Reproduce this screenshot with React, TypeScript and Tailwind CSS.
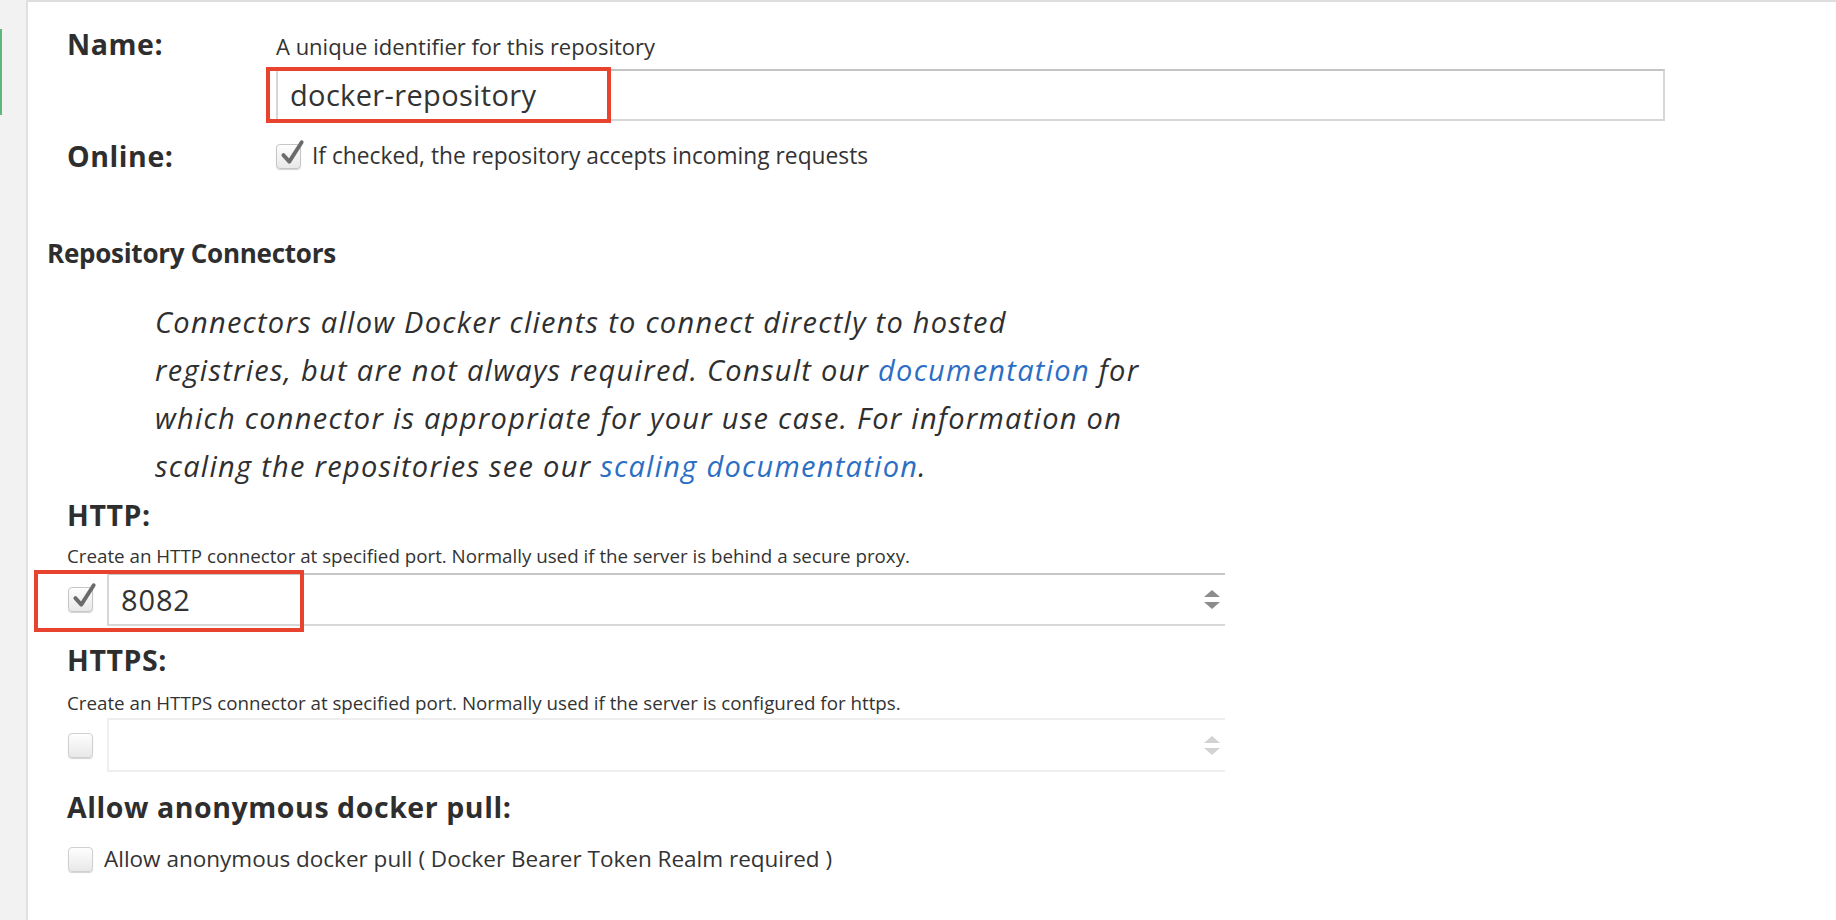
import React from "react";

const sans = "font-['Open_Sans','Lato',sans-serif]";

function Check({ checked, faded }: { checked?: boolean; faded?: boolean }) {
  return (
    <span
      className={`relative inline-flex h-[25px] w-[25px] shrink-0 rounded-[4px] border bg-linear-to-b from-[#fefefe] to-[#e8e8e8] shadow-[0_1px_1px_rgba(0,0,0,0.18)] ${
        faded ? "border-[#d0d0d0]" : "border-[#c6c6c6]"
      }`}
    >
      {checked && (
        <svg
          viewBox="0 0 26 26"
          className="absolute -top-[6px] left-[1px] h-[28px] w-[28px] overflow-visible"
          aria-hidden="true"
        >
          <path
            d="M5 15 L10.5 21 L22 3"
            fill="none"
            stroke="#6b6b6b"
            strokeWidth="3.6"
            strokeLinecap="round"
            strokeLinejoin="round"
          />
        </svg>
      )}
    </span>
  );
}

function Spinner({ faded }: { faded?: boolean }) {
  const up = faded ? "border-b-[#d2d2d2]" : "border-b-[#8c8c8c]";
  const down = faded ? "border-t-[#d2d2d2]" : "border-t-[#8c8c8c]";
  return (
    <div className="flex flex-col items-center gap-[5px]">
      <span className={`h-0 w-0 border-x-[8px] border-b-[7px] border-x-transparent ${up}`} />
      <span className={`h-0 w-0 border-x-[8px] border-t-[7px] border-x-transparent ${down}`} />
    </div>
  );
}

function Label({ children }: { children: React.ReactNode }) {
  return <div className="text-[28.5px] font-bold leading-[32px] tracking-[0.02em] text-[#2e2e2e]">{children}</div>;
}

function Hint({ children }: { children: React.ReactNode }) {
  return <p className="text-[18.75px] leading-[22px] text-[#333]">{children}</p>;
}

export default function App() {
  return (
    <div className={`flex min-h-[920px] w-[1836px] bg-white ${sans}`}>
      {/* Side rail */}
      <aside className="flex w-[26px] shrink-0 flex-col bg-[#f2f2f2]">
        <div className="mt-[29px] h-[86px] w-[2px] bg-[#5cb87f]" />
      </aside>
      <div className="w-[2px] shrink-0 bg-[#e0e0e0]" />

      <main className="flex-1 border-t-2 border-[#dedede] pl-[39px] text-[#333]">
        {/* Name */}
        <div className="flex">
          <div className="w-[209px] shrink-0 pt-[26px]">
            <Label>Name:</Label>
          </div>
          <div className="pt-[32px]">
            <p className="text-[22px] leading-[24px] text-[#333]">A unique identifier for this repository</p>
            <div className="relative mt-[11px] flex h-[52px] w-[1389px] items-center border-2 border-[#d6d6d6] border-t-[#c4c4c4] pl-[12px] text-[29px] tracking-[0.012em] text-[#333]">
              docker-repository
              <div className="pointer-events-none absolute -left-[12px] -top-[4px] h-[56px] w-[345px] border-4 border-[#e8432f]" />
            </div>
          </div>
        </div>

        {/* Online */}
        <div className="mt-[19px] flex h-[32px] items-center">
          <div className="w-[209px] shrink-0">
            <Label>Online:</Label>
          </div>
          <div className="flex items-center gap-[11px]">
            <Check checked />
            <span className="text-[22.75px] leading-[28px]">If checked, the repository accepts incoming requests</span>
          </div>
        </div>

        {/* Connectors */}
        <h3 className="-ml-[20px] mt-[66px] text-[26px] font-bold leading-[30px] tracking-[-0.01em] text-[#2e2e2e]">
          Repository Connectors
        </h3>

        <p className="ml-[88px] mt-[30px] whitespace-nowrap text-[29px] italic leading-[48px] tracking-[0.044em] text-[#2f2f2f]">
          Connectors allow Docker clients to connect directly to hosted
          <br />
          registries, but are not always required. Consult our{" "}
          <a href="#" className="text-[#2c6ec4]">documentation</a> for
          <br />
          which connector is appropriate for your use case. For information on
          <br />
          scaling the repositories see our{" "}
          <a href="#" className="text-[#2c6ec4]">scaling documentation</a>.
        </p>

        {/* HTTP */}
        <div className="mt-[9px]">
          <Label>HTTP:</Label>
        </div>
        <div className="mt-[14px]">
          <Hint>Create an HTTP connector at specified port. Normally used if the server is behind a secure proxy.</Hint>
        </div>
        <div className="relative mt-[6px] flex h-[53px] items-center">
          <div className="flex w-[40px] justify-start pl-[1px]">
            <Check checked />
          </div>
          <div className="flex h-full w-[1118px] items-center justify-between border-b-2 border-l-2 border-t-2 border-[#d8d8d8] border-t-[#c6c6c6] pl-[12px] pr-[5px] text-[29px] tracking-[0.03em] text-[#333]">
            <span>8082</span>
            <Spinner />
          </div>
          <div className="pointer-events-none absolute -left-[33px] -top-[3px] h-[62px] w-[270px] border-4 border-[#e8432f]" />
        </div>

        {/* HTTPS */}
        <div className="mt-[18px]">
          <Label>HTTPS:</Label>
        </div>
        <div className="mt-[16px]">
          <Hint>Create an HTTPS connector at specified port. Normally used if the server is configured for https.</Hint>
        </div>
        <div className="mt-[4px] flex h-[54px] items-center">
          <div className="flex w-[40px] justify-start pl-[1px]">
            <Check faded />
          </div>
          <div className="flex h-full w-[1118px] items-center justify-end border-b-2 border-l-2 border-t-2 border-[#eeeeee] pr-[5px]">
            <Spinner faded />
          </div>
        </div>

        {/* Anonymous pull */}
        <div className="mt-[19px]">
          <Label>Allow anonymous docker pull:</Label>
        </div>
        <div className="mt-[22px] flex items-center gap-[11px] pl-[1px]">
          <Check faded />
          <span className="text-[22.5px] leading-[28px]">
            Allow anonymous docker pull ( Docker Bearer Token Realm required )
          </span>
        </div>
      </main>
    </div>
  );
}
